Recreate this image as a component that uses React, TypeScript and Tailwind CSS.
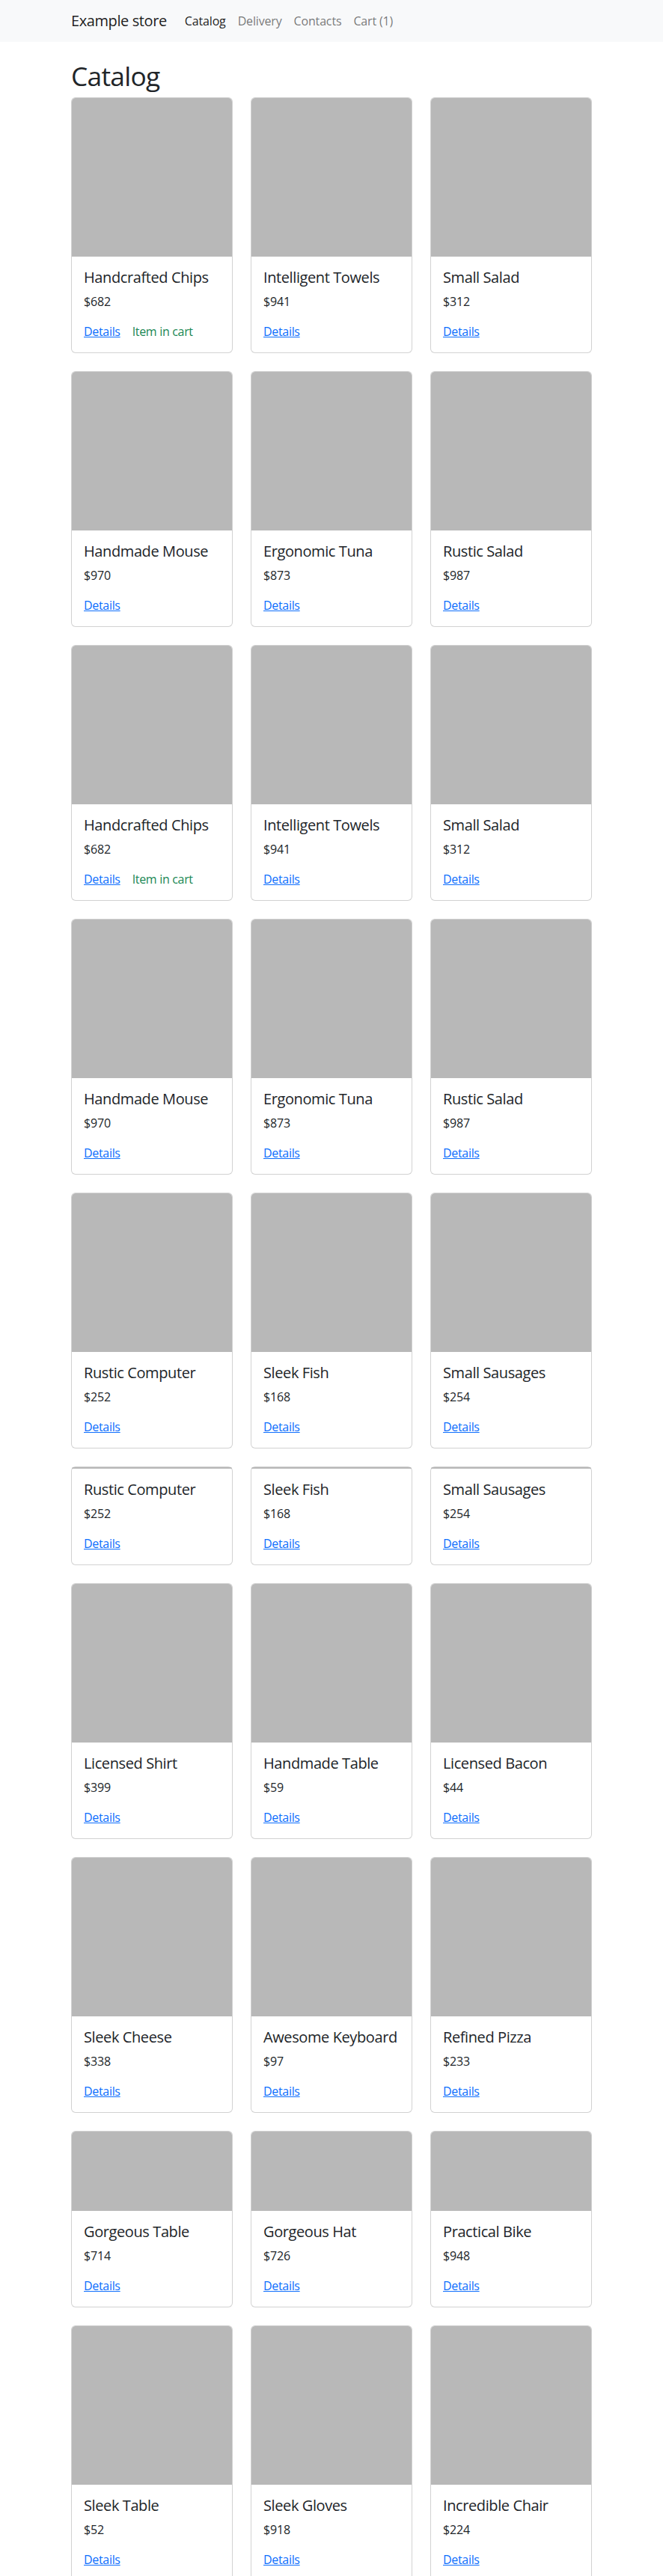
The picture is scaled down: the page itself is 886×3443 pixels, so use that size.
import React from 'react'

type Product = {
  name: string
  price: number
  inCart?: boolean
}

const rowA: Product[] = [
  { name: 'Handcrafted Chips', price: 682, inCart: true },
  { name: 'Intelligent Towels', price: 941 },
  { name: 'Small Salad', price: 312 },
]

const rowB: Product[] = [
  { name: 'Handmade Mouse', price: 970 },
  { name: 'Ergonomic Tuna', price: 873 },
  { name: 'Rustic Salad', price: 987 },
]

const rowC: Product[] = [
  { name: 'Rustic Computer', price: 252 },
  { name: 'Sleek Fish', price: 168 },
  { name: 'Small Sausages', price: 254 },
]

// image heights differ per row in the screenshot (some pictures did not load fully)
const rows: { items: Product[]; img: string }[] = [
  { items: rowA, img: 'h-[212px]' },
  { items: rowB, img: 'h-[212px]' },
  { items: rowA, img: 'h-[212px]' },
  { items: rowB, img: 'h-[212px]' },
  { items: rowC, img: 'h-[212px]' },
  { items: rowC, img: 'h-[2px]' },
  {
    items: [
      { name: 'Licensed Shirt', price: 399 },
      { name: 'Handmade Table', price: 59 },
      { name: 'Licensed Bacon', price: 44 },
    ],
    img: 'h-[212px]',
  },
  {
    items: [
      { name: 'Sleek Cheese', price: 338 },
      { name: 'Awesome Keyboard', price: 97 },
      { name: 'Refined Pizza', price: 233 },
    ],
    img: 'h-[212px]',
  },
  {
    items: [
      { name: 'Gorgeous Table', price: 714 },
      { name: 'Gorgeous Hat', price: 726 },
      { name: 'Practical Bike', price: 948 },
    ],
    img: 'h-[106px]',
  },
  {
    items: [
      { name: 'Sleek Table', price: 52 },
      { name: 'Sleek Gloves', price: 918 },
      { name: 'Incredible Chair', price: 224 },
    ],
    img: 'h-[212px]',
  },
]

function ProductCard({ product, img }: { product: Product; img: string }) {
  return (
    <div className="flex flex-col rounded-[6px] border border-black/[0.175] bg-white">
      <div className={`${img} rounded-t-[5px] bg-[#b8b8b8]`} />
      <div className="p-4">
        <h5 className="mb-2 text-[20px] leading-[1.2] font-normal tracking-[-0.02em]">{product.name}</h5>
        <p className="mb-4 text-base leading-6 tracking-[-0.01em]">${product.price}</p>
        <div className="text-base leading-6 tracking-[-0.02em]">
          <a href="#" className="text-[#0d6efd] underline">
            Details
          </a>
          {product.inCart && <span className="ml-4 text-[#198754]">Item in cart</span>}
        </div>
      </div>
    </div>
  )
}

export default function App() {
  const navItems = ['Catalog', 'Delivery', 'Contacts', 'Cart (1)']

  return (
    <div className="min-h-screen bg-white text-[#212529] font-['Open_Sans',sans-serif]">
      <nav className="bg-[#f8f9fa] py-2">
        <div className="mx-auto flex w-[720px] items-center px-3">
          <a href="#" className="mr-4 py-[5px] text-[20px] leading-[30px] tracking-[-0.02em] text-black/90">
            Example store
          </a>
          <div className="flex">
            {navItems.map((item, i) => (
              <a
                key={item}
                href="#"
                className={`px-2 py-2 text-base leading-6 tracking-[-0.01em] ${i === 0 ? 'text-black/90' : 'text-black/55'}`}
              >
                {item}
              </a>
            ))}
          </div>
        </div>
      </nav>

      <main className="mx-auto w-[720px] px-3 pt-6">
        <h1 className="mb-2 text-[35.3px] leading-[1.2] font-normal tracking-[-0.02em]">Catalog</h1>
        <div className="flex flex-col gap-6">
          {rows.map((row, r) => (
            <div key={r} className="grid grid-cols-3 gap-6">
              {row.items.map((p) => (
                <ProductCard key={p.name} product={p} img={row.img} />
              ))}
            </div>
          ))}
        </div>
      </main>
    </div>
  )
}
